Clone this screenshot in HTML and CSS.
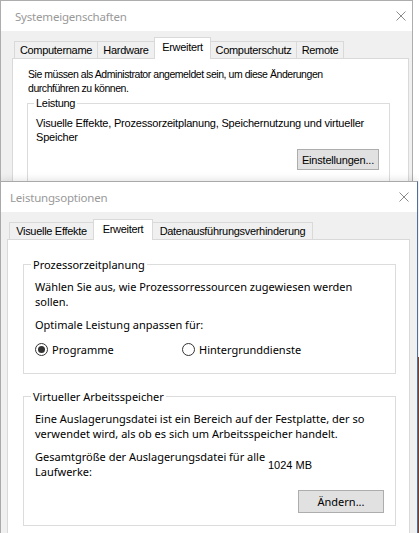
FILE: index.html
```html
<!DOCTYPE html>
<html lang="de">
<head>
<meta charset="utf-8">
<title>Leistungsoptionen</title>
<link rel="stylesheet" href="styles.css">
</head>
<body>
<div class="desk">
  <div class="wallpaper"></div>

  <div class="win win-back">
    <div class="titlebar">
      <span class="title">Systemeigenschaften</span>
      <svg class="close" width="10" height="10" viewBox="0 0 10 10"><path d="M0.5 0.5 L9.5 9.5 M9.5 0.5 L0.5 9.5" stroke="#8a8a8a" stroke-width="1" fill="none"/></svg>
    </div>
    <div class="body">
      <div class="tabs">
        <div class="tab t-name">Computername</div>
        <div class="tab t-hw">Hardware</div>
        <div class="tab active t-adv">Erweitert</div>
        <div class="tab t-prot">Computerschutz</div>
        <div class="tab t-remote">Remote</div>
      </div>
      <div class="panel">
        <p class="note">Sie müssen als Administrator angemeldet sein, um diese Änderungen<br>durchführen zu können.</p>
        <fieldset class="group">
          <legend>Leistung</legend>
          <p class="desc">Visuelle Effekte, Prozessorzeitplanung, Speichernutzung und virtueller<br>Speicher</p>
          <div class="btnrow"><button class="btn" type="button">Einstellungen...</button></div>
        </fieldset>
      </div>
    </div>
  </div>

  <div class="win win-front">
    <div class="titlebar">
      <span class="title">Leistungsoptionen</span>
      <svg class="close" width="10" height="10" viewBox="0 0 10 10"><path d="M0.5 0.5 L9.5 9.5 M9.5 0.5 L0.5 9.5" stroke="#8a8a8a" stroke-width="1" fill="none"/></svg>
    </div>
    <div class="body">
      <div class="tabs">
        <div class="tab t-vis">Visuelle Effekte</div>
        <div class="tab active t-adv2">Erweitert</div>
        <div class="tab t-dep">Datenausführungsverhinderung</div>
      </div>
      <div class="panel">
        <fieldset class="group">
          <legend>Prozessorzeitplanung</legend>
          <p>Wählen Sie aus, wie Prozessorressourcen zugewiesen werden<br>sollen.</p>
          <p class="gap">Optimale Leistung anpassen für:</p>
          <div class="radios">
            <label class="radio first"><span class="dot checked"></span>Programme</label>
            <label class="radio"><span class="dot"></span>Hintergrunddienste</label>
          </div>
        </fieldset>
        <fieldset class="group second">
          <legend>Virtueller Arbeitsspeicher</legend>
          <p>Eine Auslagerungsdatei ist ein Bereich auf der Festplatte, der so<br>verwendet wird, als ob es sich um Arbeitsspeicher handelt.</p>
          <div class="size gap">
            <span class="size-label">Gesamtgröße der Auslagerungsdatei für alle<br>Laufwerke:</span>
            <span class="size-value">1024 MB</span>
          </div>
          <div class="btnrow"><button class="btn" type="button">Ändern...</button></div>
        </fieldset>
      </div>
    </div>
  </div>
</div>
</body>
</html>
```
FILE: styles.css
```css
* { box-sizing: border-box; }
html, body { margin: 0; padding: 0; }
body { width: 419px; height: 533px; overflow: hidden; background: #fff; }
p { margin: 0; }

.desk { position: relative; width: 419px; height: 533px; overflow: hidden; background: #fff; }
.wallpaper { position: absolute; right: 0; top: 357px; width: 3px; height: 176px; background: #7d4530; }

.win { position: absolute; left: 0; background: #f0f0f0; color: #000; }
.win-back { top: 0; width: 413px; height: 320px; border: 1px solid #adadad; font-family: "Liberation Sans", Arial, sans-serif; font-size: 11px; letter-spacing: -0.3px; }
.win-front { top: 181px; width: 418px; height: 380px; border: 1px solid #a9a9a9; border-right-color: #4f6f9c; font-family: "Noto Sans", sans-serif; font-size: 11px; letter-spacing: 0; box-shadow: 0 -1px 8px rgba(0, 0, 0, 0.12); }

.titlebar { height: 30px; background: #fff; display: flex; align-items: center; }
.title { font-family: "Noto Sans", sans-serif; font-size: 11.5px; letter-spacing: -0.2px; color: #999; }
.win-back .titlebar { padding-left: 14px; }
.win-front .titlebar { padding-left: 9px; }
.close { margin-left: auto; display: block; }
.win-back .close { margin-right: 6px; }
.win-front .close { margin-right: 8px; }

.body { display: flex; flex-direction: column; }
.win-back .body { padding: 6px 0 0 11px; }
.win-front .body { padding: 7px 0 0 6px; }

.tabs { display: flex; align-items: flex-end; padding-left: 2px; font-family: "Liberation Sans", Arial, sans-serif; font-size: 11px; letter-spacing: -0.3px; }
.win-back .tabs { height: 21px; }
.win-front .tabs { height: 20px; }
.tab { border: 1px solid #d9d9d9; border-bottom: 0; margin-left: -1px; background: #f0f0f0; display: flex; align-items: center; justify-content: center; white-space: nowrap; padding: 0; }
.tab:first-child { margin-left: 0; }
.tab.active { background: #fff; position: relative; z-index: 1; margin-bottom: -1px; padding-bottom: 3px; }
.win-back .tab { height: 17px; }
.win-back .tab.active { height: 22px; }
.win-front .tab { height: 17px; }
.win-front .tab.active { height: 21px; }

.t-name { width: 84px; }
.t-hw { width: 58px; }
.t-adv { width: 57px; }
.t-prot { width: 87px; }
.t-remote { width: 48px; }
.t-vis { width: 85px; }
.t-adv2 { width: 60px; }
.t-dep { width: 161px; }

.panel { background: #fff; border: 1px solid #d9d9d9; }
.win-back .panel { width: 397px; height: 260px; padding: 8px 0 0 15px; line-height: 14px; }
.win-front .panel { width: 403px; height: 320px; padding: 17px 0 0 15px; line-height: 15px; }

.note { font-size: 10.5px; letter-spacing: -0.45px; }
.desc { letter-spacing: -0.2px; }

.group { margin: 0; border: 1px solid #dcdcdc; min-width: 0; }
.group legend { padding: 0 2px; }
.win-back .group { width: 363px; margin: 1px 0 0 -1px; padding: 6px 0 0 8px; height: 120px; }
.win-back .group legend { margin-left: -2px; line-height: 14px; }
.win-front .group { width: 373px; padding: 7px 0 16px 11px; }
.win-front .group legend { margin-left: -4px; line-height: 15px; }
.win-front .group.second { margin-top: 15px; padding-bottom: 12px; }

.gap { margin-top: 8px; }

.radios { display: flex; margin-top: 10px; }
.radio { display: flex; align-items: center; }
.radio.first { width: 147px; }
.dot { width: 13px; height: 13px; border: 1px solid #333; border-radius: 50%; margin-right: 4px; display: flex; align-items: center; justify-content: center; background: #fff; }
.dot.checked::after { content: ""; width: 7px; height: 7px; border-radius: 50%; background: #333; }

.size { display: flex; align-items: center; }
.size-label { width: 233px; }
.size-value { font-family: "Liberation Sans", Arial, sans-serif; font-size: 11px; letter-spacing: 0; margin-top: 2px; }

.btnrow { display: flex; justify-content: flex-end; }
.btn { background: #e1e1e1; border: 1px solid #adadad; border-radius: 0; color: #000; padding: 0; font: inherit; letter-spacing: inherit; }
.win-back .btnrow { margin-top: 5px; padding-right: 10px; }
.win-back .btn { width: 82px; height: 21px; letter-spacing: -0.2px; }
.win-front .btnrow { margin-top: 11px; padding-right: 11px; }
.win-front .btn { width: 86px; height: 23px; }
```
